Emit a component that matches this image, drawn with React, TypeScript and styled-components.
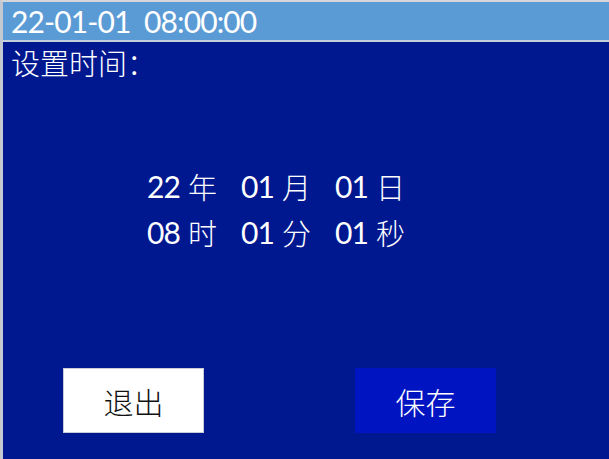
import React from "react";
import styled, { createGlobalStyle } from "styled-components";

const Global = createGlobalStyle`
  html, body { margin: 0; padding: 0; background: #00188f; }
  * { box-sizing: border-box; }
`;

const LATIN = `"Lato", "Noto Sans CJK SC", sans-serif`;
const CJK = `"Noto Sans CJK SC", sans-serif`;

const Screen = styled.div`
  width: 609px;
  height: 459px;
  background: #00188f;
  border-left: 3px solid #c4c8d0;
  border-top: 2px solid #d4d6da;
  display: flex;
  flex-direction: column;
  overflow: hidden;
`;

const TitleBar = styled.div`
  height: 40px;
  background: #5b9bd5;
  border-bottom: 2px solid #c6cfdd;
  display: flex;
  align-items: center;
  padding-left: 8px;
  color: #ffffff;
  font-family: ${LATIN};
  font-size: 30px;
  letter-spacing: -0.9px;
  white-space: pre;
`;

const Label = styled.div`
  height: 40px;
  line-height: 40px;
  padding-left: 8px;
  color: #ffffff;
  font-family: ${CJK};
  font-weight: 300;
  font-size: 29px;
`;

const Fields = styled.div`
  margin-top: 81px;
  padding-left: 144px;
  display: grid;
  grid-template-columns: repeat(3, 94px);
  grid-auto-rows: 46px;
`;

const Field = styled.div`
  display: flex;
  align-items: center;
  color: #ffffff;
`;

const Num = styled.span`
  width: 41px;
  font-family: ${LATIN};
  font-size: 30px;
  letter-spacing: -1px;
`;

const Unit = styled.span`
  font-family: ${CJK};
  font-weight: 300;
  font-size: 29px;
`;

const Buttons = styled.div`
  margin-top: auto;
  margin-bottom: 26px;
  display: flex;
  padding-left: 60px;
  gap: 151px;
`;

const Button = styled.div<{ $primary?: boolean }>`
  width: 141px;
  height: 65px;
  display: flex;
  align-items: center;
  justify-content: center;
  font-family: ${CJK};
  font-weight: 300;
  font-size: 30px;
  background: ${(p) => (p.$primary ? "#0014c2" : "#ffffff")};
  color: ${(p) => (p.$primary ? "#ffffff" : "#111111")};
  border: 1px solid ${(p) => (p.$primary ? "#0014c2" : "#c8cbd4")};
`;

const fields: [string, string][] = [
  ["22", "年"],
  ["01", "月"],
  ["01", "日"],
  ["08", "时"],
  ["01", "分"],
  ["01", "秒"],
];

export default function App() {
  return (
    <>
      <Global />
      <Screen>
        <TitleBar>22-01-01  08:00:00</TitleBar>
        <Label>设置时间：</Label>
        <Fields>
          {fields.map(([n, u], i) => (
            <Field key={i}>
              <Num>{n}</Num>
              <Unit>{u}</Unit>
            </Field>
          ))}
        </Fields>
        <Buttons>
          <Button>退出</Button>
          <Button $primary>保存</Button>
        </Buttons>
      </Screen>
    </>
  );
}
